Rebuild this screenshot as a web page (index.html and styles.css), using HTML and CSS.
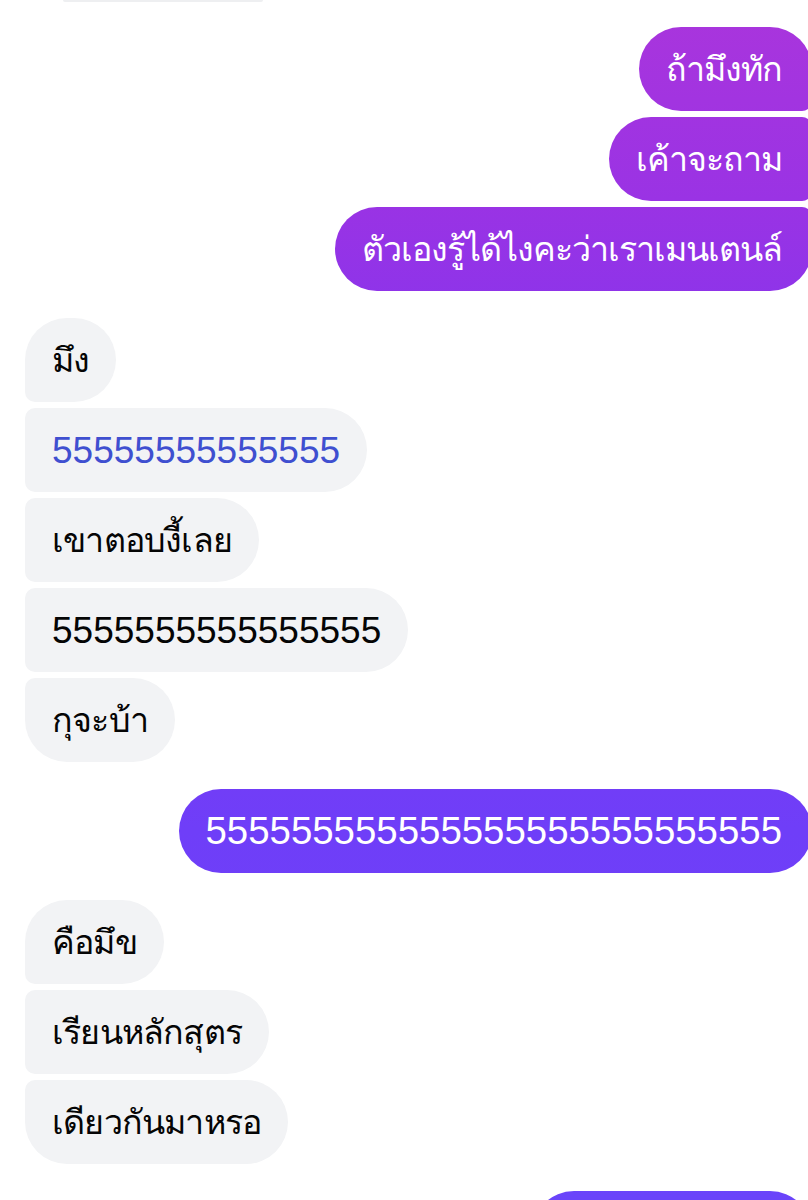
FILE: index.html
```html
<!DOCTYPE html>
<html lang="th">
<head>
<meta charset="utf-8">
<title>Chat</title>
<link rel="stylesheet" href="styles.css">
</head>
<body>
<div class="chat">
  <div class="prev-edge"></div>

  <div class="group sent-group">
    <div class="bubble sent first th">ถ้ามึงทัก</div>
    <div class="bubble sent mid th">เค้าจะถาม</div>
    <div class="bubble sent last th">ตัวเองรู้ได้ไงคะว่าเราเมนเตนล์</div>
  </div>

  <div class="group recv-group">
    <div class="bubble recv first th">มึง</div>
    <div class="bubble recv mid link">55555555555555</div>
    <div class="bubble recv mid th">เขาตอบงี้เลย</div>
    <div class="bubble recv mid">5555555555555555</div>
    <div class="bubble recv last th">กุจะบ้า</div>
  </div>

  <div class="group sent-group">
    <div class="bubble sent single">555555555555555555555555555</div>
  </div>

  <div class="group recv-group">
    <div class="bubble recv first th">คือมึข</div>
    <div class="bubble recv mid th">เรียนหลักสุตร</div>
    <div class="bubble recv last th">เดียวกันมาหรอ</div>
  </div>

  <div class="group sent-group">
    <div class="bubble sent first tail">&nbsp;</div>
  </div>
</div>
</body>
</html>
```

FILE: styles.css
```css
html, body {
  margin: 0;
  padding: 0;
  background: #ffffff;
}

body {
  width: 808px;
  height: 1200px;
  overflow: hidden;
  font-family: "Liberation Sans", "Noto Sans", sans-serif;
}

.chat {
  display: flex;
  flex-direction: column;
  gap: 27px;
  padding: 0 0 0 25px;
  margin-right: -4px;
}

.prev-edge {
  width: 200px;
  height: 2px;
  margin-left: 38px;
  background: #eeeff1;
  border-radius: 0 0 6px 6px;
  margin-bottom: -2px;
}

.group {
  display: flex;
  flex-direction: column;
  gap: 6px;
}

.sent-group {
  align-items: flex-end;
}

.recv-group {
  align-items: flex-start;
}

.bubble {
  height: 84px;
  box-sizing: border-box;
  display: flex;
  align-items: center;
  white-space: nowrap;
  padding: 0 27px;
  font-size: 37px;
  line-height: 1;
}

.th {
  font-size: 34px;
  letter-spacing: -0.8px;
}

.sent {
  color: #ffffff;
  font-size: 38.4px;
  padding: 0 30px 0 27px;
  background: linear-gradient(to bottom, #aa35dc 0px, #9a33e4 200px, #8c34ea 320px, #7a3bf2 620px, #6f3ef8 830px, #6a44fa 1200px);
  background-attachment: fixed;
}

.sent.th {
  font-size: 34px;
  letter-spacing: -1px;
}

.sent.first { border-radius: 42px 42px 10px 42px; }
.sent.mid { border-radius: 42px 10px 10px 42px; }
.sent.last { border-radius: 42px 10px 42px 42px; }
.sent.single { border-radius: 42px; }
.sent.tail { width: 280px; }

.recv {
  color: #050505;
  background: #f2f3f5;
}

.recv.first { border-radius: 42px 42px 42px 10px; }
.recv.mid { border-radius: 10px 42px 42px 10px; }
.recv.last { border-radius: 10px 42px 42px 42px; }

.recv.link {
  color: #3f4fd0;
}
```
